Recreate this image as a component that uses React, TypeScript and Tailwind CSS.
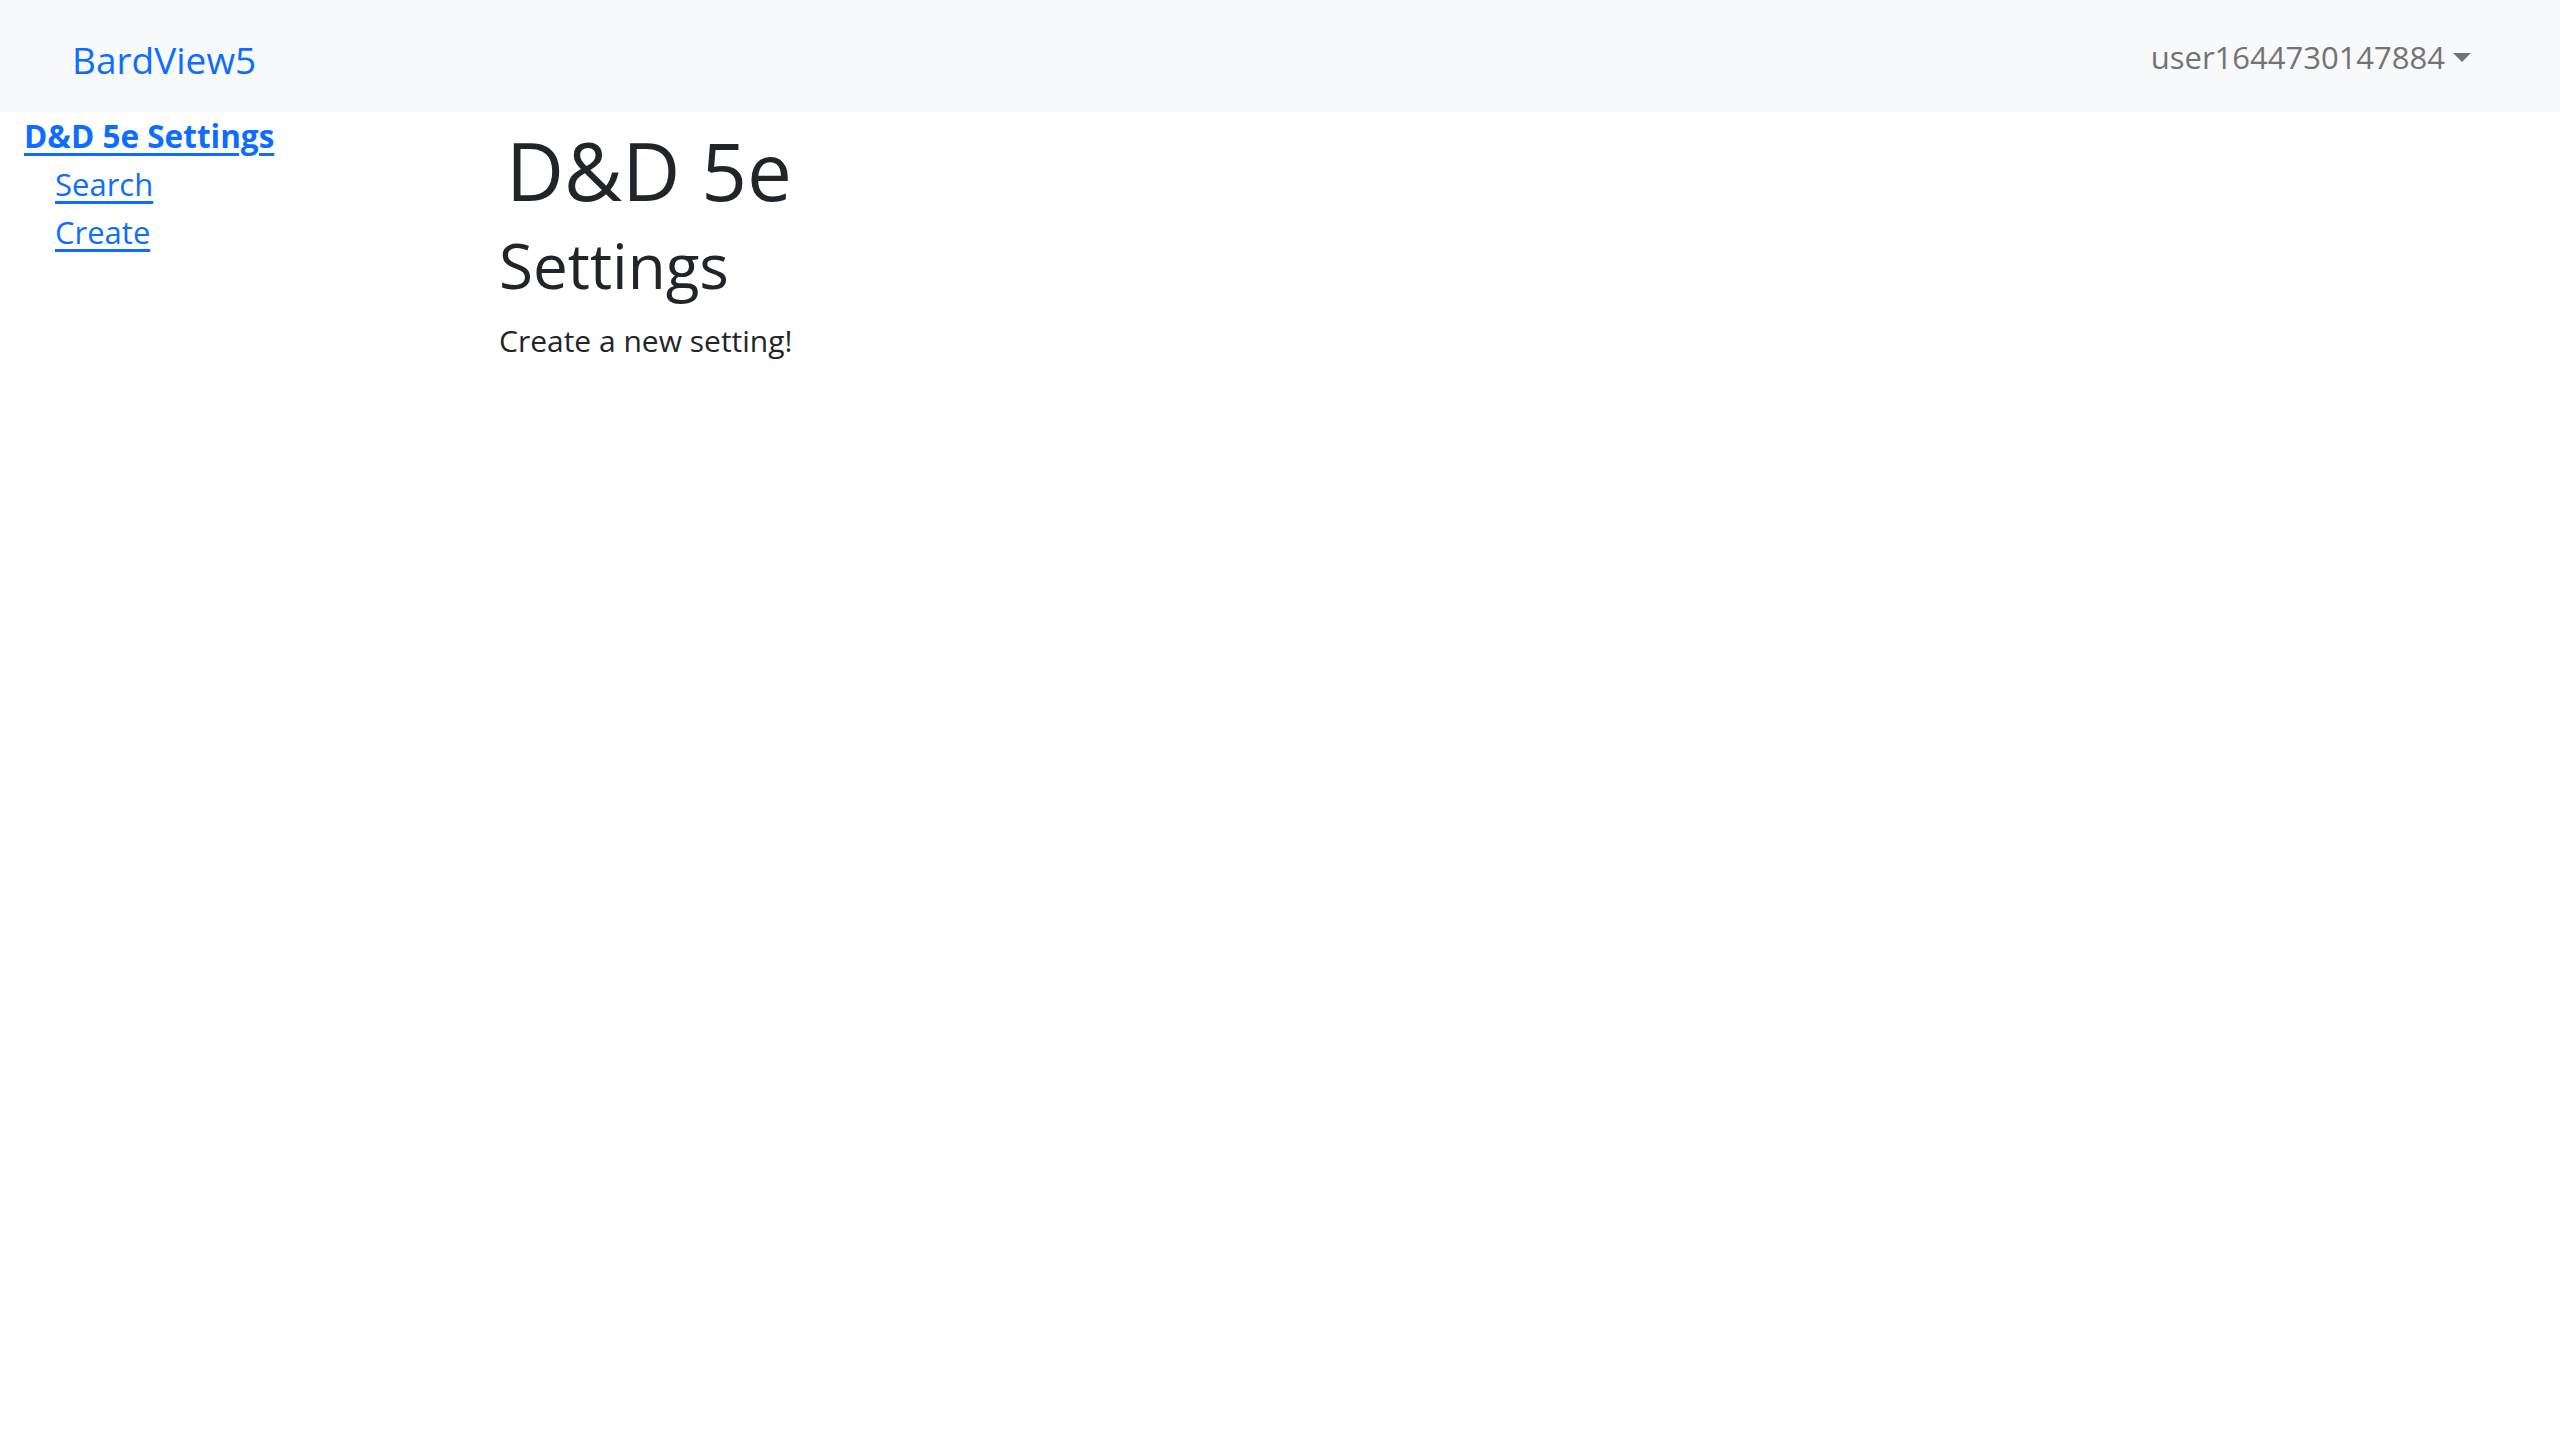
const font = { fontFamily: '"Open Sans", "Noto Sans", sans-serif' };

const Caret = () => (
  <span className="ml-[8px] inline-block h-0 w-0 border-x-[9px] border-t-[9px] border-x-transparent border-t-[#737373] align-[8px]" />
);

const App = () => {
  return (
    <div className="min-h-screen bg-white text-[#212529]" style={font}>
      {/* NAVBAR */}
      <nav className="flex h-[112px] items-center justify-between bg-[#f8f9fa] pl-[72px] pr-[89px]">
        <a className="pt-[8px] text-[37px] leading-[60px] text-[#0d6efd]">BardView5</a>
        <div className="flex items-center pt-[2px] text-[31px] leading-[48px] text-[#737373]">
          user1644730147884
          <Caret />
        </div>
      </nav>

      <div className="flex">
        {/* SIDEBAR */}
        <aside className="w-[499px] shrink-0 pl-[24px]">
          <ul className="text-[31px] leading-[48px]">
            <li>
              <a className="text-[31.5px] font-bold text-[#0d6efd] underline underline-offset-[5px]">D&amp;D 5e Settings</a>
              <ul className="pl-[31px]">
                <li>
                  <a className="text-[#0d6efd] underline underline-offset-[5px]">Search</a>
                </li>
                <li>
                  <a className="text-[#0d6efd] underline underline-offset-[5px]">Create</a>
                </li>
              </ul>
            </li>
          </ul>
        </aside>

        {/* MAIN */}
        <main className="flex-1 pt-[10px]">
          <h1 className="pl-[7px] text-[80px] leading-[96px] font-normal">D&amp;D 5e</h1>
          <h2 className="mt-[9px] text-[62px] leading-[76px] font-normal">Settings</h2>
          <p className="mt-[14px] text-[30px] leading-[48px]">Create a new setting!</p>
        </main>
      </div>
    </div>
  );
};

export default App;
